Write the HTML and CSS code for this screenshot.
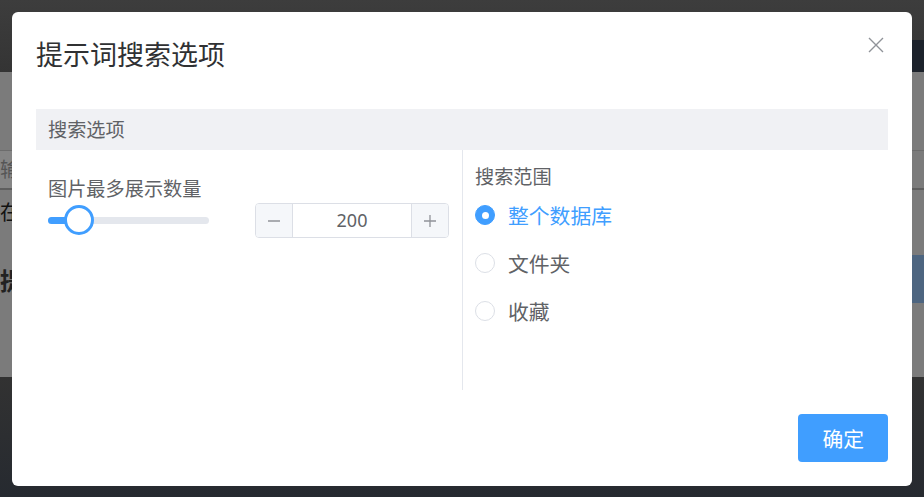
FILE: index.html
```html
<!DOCTYPE html>
<html lang="zh-CN">
<head>
  <meta charset="UTF-8">
  <meta name="viewport" content="width=device-width, initial-scale=1.0">
  <title>提示词搜索选项</title>
  <link rel="stylesheet" href="styles.css">
</head>
<body>
  <div class="page">
    <header class="topbar">
      <div class="top-btn"></div>
    </header>
    <main class="main">
      <div class="search-row">
        <div class="search-input">输</div>
      </div>
      <div class="hint">在</div>
      <div class="title-row">
        <span class="page-title">提</span>
        <div class="blue-block"></div>
      </div>
    </main>
    <footer class="footer"></footer>
  </div>

  <div class="dialog">
    <div class="dialog-header">
      <h2 class="dialog-title">提示词搜索选项</h2>
      <button class="close-btn" aria-label="close">
        <svg width="16" height="16" viewBox="0 0 16 16">
          <path d="M1 1 L15 15 M15 1 L1 15" stroke="#909399" stroke-width="1.4" fill="none"/>
        </svg>
      </button>
    </div>

    <div class="section-bar">搜索选项</div>

    <div class="columns">
      <div class="col col-left">
        <div class="field-label">图片最多展示数量</div>
        <div class="count-row">
          <div class="slider">
            <div class="slider-fill"></div>
            <div class="slider-handle"></div>
          </div>
          <div class="num-input">
            <span class="num-btn">
              <svg width="14" height="14" viewBox="0 0 14 14"><path d="M1 7 H13" stroke="#909399" stroke-width="1.3"/></svg>
            </span>
            <span class="num-value">200</span>
            <span class="num-btn">
              <svg width="14" height="14" viewBox="0 0 14 14"><path d="M1 7 H13 M7 1 V13" stroke="#909399" stroke-width="1.3"/></svg>
            </span>
          </div>
        </div>
      </div>

      <div class="col col-right">
        <div class="field-label">搜索范围</div>
        <label class="radio checked"><span class="radio-dot"></span>整个数据库</label>
        <label class="radio"><span class="radio-dot"></span>文件夹</label>
        <label class="radio"><span class="radio-dot"></span>收藏</label>
      </div>
    </div>

    <div class="dialog-footer">
      <button class="ok-btn">确定</button>
    </div>
  </div>
</body>
</html>
```

FILE: styles.css
```css
body {
  margin: 0;
  font-family: "Noto Sans", "Noto Sans CJK SC", sans-serif;
  overflow: hidden;
  height: 497px;
}

/* dimmed page behind the dialog */
.page {
  display: flex;
  flex-direction: column;
  height: 497px;
}

.topbar {
  height: 72px;
  background: linear-gradient(to bottom, #3d3d3d, #343434);
  display: flex;
  justify-content: flex-end;
}

.top-btn {
  width: 60px;
  height: 32px;
  margin-top: 40px;
  background-color: #1c222b;
}

.main {
  height: 305px;
  background-color: #7b7b7b;
  padding-top: 78px;
  box-sizing: border-box;
}

.search-row {
  height: 40px;
  border-top: 1px solid #6c6c6c;
  border-bottom: 2px solid #5e5e5e;
  box-sizing: border-box;
}

.search-input {
  width: 200px;
  height: 100%;
  background-color: #858585;
  color: #555;
  font-size: 20px;
  line-height: 37px;
}

.hint {
  margin-top: 8px;
  height: 30px;
  line-height: 30px;
  font-size: 20px;
  color: #111;
}

.title-row {
  margin-top: 27px;
  height: 48px;
  display: flex;
  align-items: center;
}

.page-title {
  font-size: 24px;
  font-weight: bold;
  color: #222;
}

.blue-block {
  margin-left: auto;
  width: 120px;
  height: 48px;
  background-color: #4d6580;
}

.footer {
  flex: 1;
  background: linear-gradient(to bottom, #323232, #262a30);
}

/* dialog */
.dialog {
  position: fixed;
  left: 12px;
  top: 12px;
  width: 900px;
  height: 474px;
  box-sizing: border-box;
  padding: 24px;
  background-color: #fff;
  border-radius: 6px;
  display: flex;
  flex-direction: column;
}

.dialog-header {
  height: 73px;
  display: flex;
  justify-content: space-between;
  align-items: flex-start;
}

.dialog-title {
  margin: 0;
  font-size: 27px;
  font-weight: normal;
  line-height: 37px;
  color: #303133;
}

.close-btn {
  margin: 1px 4px 0 0;
  padding: 0;
  border: none;
  background: none;
  width: 16px;
  height: 16px;
  cursor: pointer;
}

.close-btn svg {
  display: block;
}

.section-bar {
  height: 41px;
  line-height: 41px;
  padding-left: 12px;
  background-color: #f0f1f4;
  font-size: 19.2px;
  color: #606266;
}

.columns {
  height: 240px;
  display: flex;
}

.col {
  box-sizing: border-box;
}

.col-left {
  width: 427px;
  padding: 24px 12px;
  border-right: 1px solid #e4e7ed;
}

.col-right {
  flex: 1;
  padding: 12px 12px;
}

.field-label {
  font-size: 19.2px;
  line-height: 29px;
  color: #606266;
}

.count-row {
  display: flex;
  align-items: center;
  gap: 46px;
}

.slider {
  position: relative;
  width: 161px;
  height: 7px;
  border-radius: 4px;
  background-color: #e4e7ed;
}

.slider-fill {
  width: 31px;
  height: 100%;
  border-radius: 4px 0 0 4px;
  background-color: #409eff;
}

.slider-handle {
  position: absolute;
  left: 16px;
  top: -12px;
  width: 30px;
  height: 30px;
  box-sizing: border-box;
  border: 3px solid #409eff;
  border-radius: 50%;
  background-color: #fff;
}

.num-input {
  width: 194px;
  height: 35px;
  box-sizing: border-box;
  border: 1px solid #dcdfe6;
  border-radius: 4px;
  display: flex;
  overflow: hidden;
}

.num-btn {
  width: 36px;
  display: flex;
  align-items: center;
  justify-content: center;
  background-color: #f5f7fa;
}

.num-btn:first-child {
  border-right: 1px solid #dcdfe6;
}

.num-btn:last-child {
  border-left: 1px solid #dcdfe6;
}

.num-value {
  flex: 1;
  text-align: center;
  font-size: 18px;
  line-height: 33px;
  color: #606266;
}

.radio {
  height: 48px;
  display: flex;
  align-items: center;
  gap: 13px;
  font-size: 20.8px;
  color: #606266;
}

.radio-dot {
  width: 20px;
  height: 20px;
  box-sizing: border-box;
  border: 1px solid #dcdfe6;
  border-radius: 50%;
  background-color: #fff;
  display: flex;
  align-items: center;
  justify-content: center;
}

.radio.checked {
  color: #409eff;
}

.radio.checked .radio-dot {
  border-color: #409eff;
  background-color: #409eff;
}

.radio.checked .radio-dot::after {
  content: "";
  width: 7px;
  height: 7px;
  border-radius: 50%;
  background-color: #fff;
}

.dialog-footer {
  margin-top: 24px;
  display: flex;
  justify-content: flex-end;
}

.ok-btn {
  height: 48px;
  padding: 0 24px;
  border: none;
  border-radius: 4px;
  background-color: #409eff;
  color: #fff;
  font-family: inherit;
  font-size: 20.8px;
  cursor: pointer;
}
```
